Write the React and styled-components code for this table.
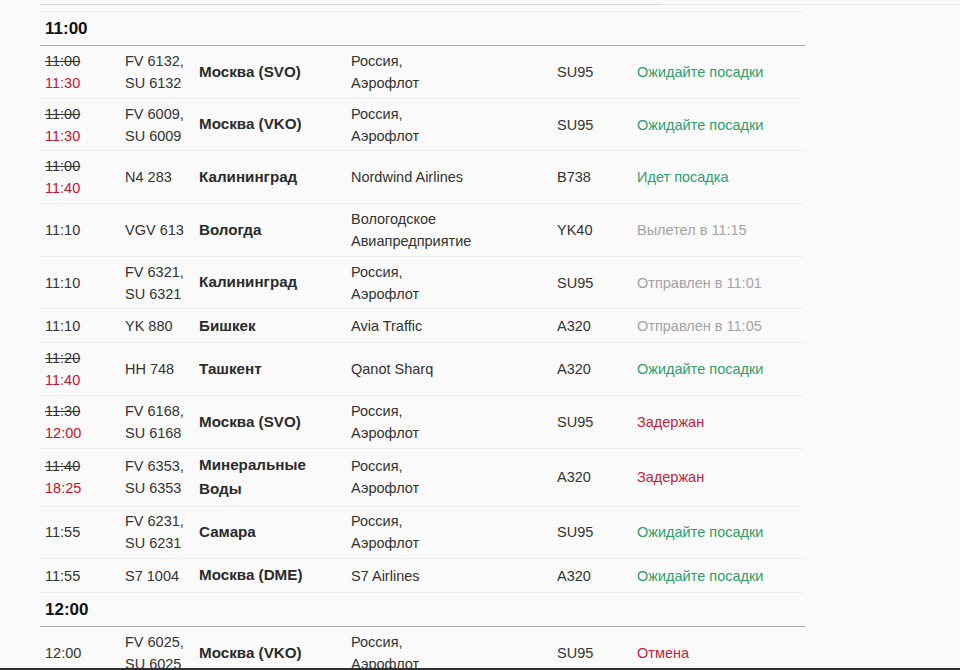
import React from "react";
import styled, { createGlobalStyle } from "styled-components";

const GlobalStyle = createGlobalStyle`
  html, body {
    margin: 0;
    padding: 0;
    background: #fafafa;
  }
  body {
    font-family: "Liberation Sans", Arial, Helvetica, sans-serif;
    color: #333;
    font-size: 14.5px;
    overflow: hidden;
  }
`;

const Page = styled.div`
  height: 670px;
  overflow: hidden;
`;

const TopRule = styled.div`
  display: flex;
  margin-left: 40px;
  height: 5px;
`;

const RuleSegment = styled.div`
  flex: ${(p) => (p.$grow ? 1 : "0 0 620px")};
  border-bottom: 1px solid ${(p) => (p.$grow ? "#ececec" : "#d6d6d6")};
`;

const Board = styled.div`
  margin: 6px 0 0 40px;
  width: 765px;
  border-top: 1px solid #efefef;
`;

const HourRow = styled.div`
  height: 34px;
  box-sizing: border-box;
  display: flex;
  align-items: center;
  padding-left: 5px;
  font-size: 17px;
  font-weight: 700;
  color: #111;
  border-bottom: 1px solid #a9a9a9;
`;

const Row = styled.div`
  display: grid;
  grid-template-columns: 80px 74px 152px 206px 80px 173px;
  align-items: center;
  min-height: 34px;
  box-sizing: border-box;
  padding: 3.85px 0;
  border-bottom: 1px solid #efefef;
  line-height: 22px;
`;

const Cell = styled.div`
  padding-left: 5px;
  white-space: nowrap;
`;

const OldTime = styled.s`
  display: block;
  color: #333;
`;

const NewTime = styled.span`
  display: block;
  color: #c8102e;
`;

const City = styled(Cell)`
  font-size: 15.2px;
  font-weight: 700;
  line-height: 24.5px;
  white-space: normal;
  color: #2b2b2b;
`;

const Status = styled(Cell)`
  color: ${(p) =>
    p.$kind === "ok" ? "#2e9e6b" : p.$kind === "bad" ? "#c41e3a" : "#a3a3a3"};
`;

const BottomEdge = styled.div`
  position: fixed;
  left: 0;
  right: 0;
  bottom: 0;
  height: 2px;
  background: #2f2f2f;
`;

const hours = [
  {
    hour: "11:00",
    flights: [
      { old: "11:00", time: "11:30", no: ["FV 6132,", "SU 6132"], city: ["Москва (SVO)"], air: ["Россия,", "Аэрофлот"], plane: "SU95", status: "Ожидайте посадки", kind: "ok" },
      { old: "11:00", time: "11:30", no: ["FV 6009,", "SU 6009"], city: ["Москва (VKO)"], air: ["Россия,", "Аэрофлот"], plane: "SU95", status: "Ожидайте посадки", kind: "ok" },
      { old: "11:00", time: "11:40", no: ["N4 283"], city: ["Калининград"], air: ["Nordwind Airlines"], plane: "B738", status: "Идет посадка", kind: "ok" },
      { time: "11:10", no: ["VGV 613"], city: ["Вологда"], air: ["Вологодское", "Авиапредприятие"], plane: "YK40", status: "Вылетел в 11:15", kind: "gone" },
      { time: "11:10", no: ["FV 6321,", "SU 6321"], city: ["Калининград"], air: ["Россия,", "Аэрофлот"], plane: "SU95", status: "Отправлен в 11:01", kind: "gone" },
      { time: "11:10", no: ["YK 880"], city: ["Бишкек"], air: ["Avia Traffic"], plane: "A320", status: "Отправлен в 11:05", kind: "gone" },
      { old: "11:20", time: "11:40", no: ["HH 748"], city: ["Ташкент"], air: ["Qanot Sharq"], plane: "A320", status: "Ожидайте посадки", kind: "ok" },
      { old: "11:30", time: "12:00", no: ["FV 6168,", "SU 6168"], city: ["Москва (SVO)"], air: ["Россия,", "Аэрофлот"], plane: "SU95", status: "Задержан", kind: "bad" },
      { old: "11:40", time: "18:25", no: ["FV 6353,", "SU 6353"], city: ["Минеральные", "Воды"], air: ["Россия,", "Аэрофлот"], plane: "A320", status: "Задержан", kind: "bad" },
      { time: "11:55", no: ["FV 6231,", "SU 6231"], city: ["Самара"], air: ["Россия,", "Аэрофлот"], plane: "SU95", status: "Ожидайте посадки", kind: "ok" },
      { time: "11:55", no: ["S7 1004"], city: ["Москва (DME)"], air: ["S7 Airlines"], plane: "A320", status: "Ожидайте посадки", kind: "ok" },
    ],
  },
  {
    hour: "12:00",
    flights: [
      { time: "12:00", no: ["FV 6025,", "SU 6025"], city: ["Москва (VKO)"], air: ["Россия,", "Аэрофлот"], plane: "SU95", status: "Отмена", kind: "bad" },
    ],
  },
];

const Lines = ({ items }) =>
  items.map((t) => (
    <div key={t}>{t}</div>
  ));

const FlightRow = ({ f }) => (
  <Row>
    <Cell>
      {f.old ? (
        <>
          <OldTime>{f.old}</OldTime>
          <NewTime>{f.time}</NewTime>
        </>
      ) : (
        f.time
      )}
    </Cell>
    <Cell>
      <Lines items={f.no} />
    </Cell>
    <City>
      <Lines items={f.city} />
    </City>
    <Cell>
      <Lines items={f.air} />
    </Cell>
    <Cell>{f.plane}</Cell>
    <Status $kind={f.kind}>{f.status}</Status>
  </Row>
);

export default function App() {
  return (
    <Page>
      <GlobalStyle />
      <TopRule>
        <RuleSegment />
        <RuleSegment $grow />
      </TopRule>
      <Board>
        {hours.map((h) => (
          <React.Fragment key={h.hour}>
            <HourRow>{h.hour}</HourRow>
            {h.flights.map((f, i) => (
              <FlightRow key={h.hour + i} f={f} />
            ))}
          </React.Fragment>
        ))}
      </Board>
      <BottomEdge />
    </Page>
  );
}
